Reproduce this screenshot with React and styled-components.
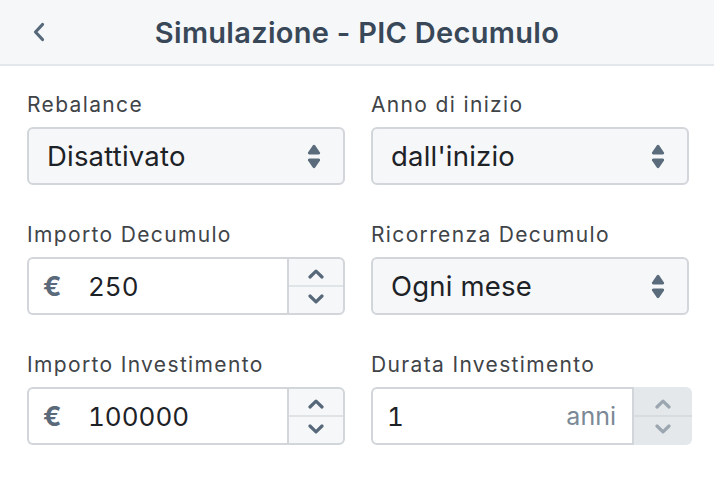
import React from "react";
import styled, { createGlobalStyle } from "styled-components";

const Global = createGlobalStyle`
  html, body { margin: 0; padding: 0; background: #ffffff; }
  body { font-family: Inter, "Noto Sans", sans-serif; -webkit-font-smoothing: antialiased; }
  * { box-sizing: border-box; }
`;

const Page = styled.div`
  width: 714px;
`;

const Header = styled.header`
  height: 66px;
  background: #f5f7f9;
  border-bottom: 2px solid #e2e7eb;
  display: grid;
  grid-template-columns: 1fr auto 1fr;
  align-items: center;
`;

const BackButton = styled.button`
  justify-self: start;
  margin-left: 31px;
  background: none;
  border: 0;
  padding: 0;
  width: 16px;
  height: 22px;
  display: flex;
  align-items: center;
  justify-content: center;
  color: #566879;
`;

const Title = styled.h1`
  margin: 0;
  font-size: 29px;
  font-weight: 600;
  color: #394858;
  letter-spacing: 0.3px;
`;

const Form = styled.div`
  display: grid;
  grid-template-columns: 318px 318px;
  column-gap: 26px;
  row-gap: 37px;
  padding: 26px 25px 0 27px;
`;

const Field = styled.div`
  display: flex;
  flex-direction: column;
`;

const Label = styled.label`
  font-size: 21px;
  line-height: 26px;
  color: #404448;
  letter-spacing: 1.35px;
  margin-bottom: 9px;
`;

const Select = styled.div`
  height: 58px;
  border: 2px solid #d2d6da;
  border-radius: 6px;
  background: #f6f7f8;
  display: flex;
  align-items: center;
  justify-content: space-between;
  padding: 0 22px 0 18px;
  font-size: 27.5px;
  letter-spacing: 0.2px;
  color: #1d2227;
`;

const NumberBox = styled.div`
  height: 58px;
  display: flex;
  align-items: stretch;
  margin-right: ${(p) => (p.$wide ? "-3px" : "0")};
`;

const InputArea = styled.div`
  flex: 1;
  display: flex;
  align-items: center;
  background: #ffffff;
  border: 2px solid #d2d6da;
  border-right: ${(p) => (p.$disabled ? "2px solid #d2d6da" : "0")};
  border-radius: 6px 0 0 6px;
  padding: 0 16px 0 14px;
  font-size: 26px;
  color: #1d2227;
  font-variant-numeric: tabular-nums;
`;

const Currency = styled.span`
  font-weight: 700;
  color: #5a6a7a;
  width: 20px;
  margin-right: 25px;
  font-size: 27px;
`;

const Value = styled.span`
  flex: 1;
`;

const Unit = styled.span`
  color: #7b8996;
  font-size: 25px;
`;

const Spinner = styled.div`
  width: 58px;
  display: flex;
  flex-direction: column;
  background: ${(p) => (p.$disabled ? "#e4e8eb" : "#f6f7f8")};
  border: ${(p) => (p.$disabled ? "0" : "2px solid #d2d6da")};
  border-radius: 0 6px 6px 0;
  color: ${(p) => (p.$disabled ? "#9ba6b0" : "#566879")};
`;

const SpinHalf = styled.div`
  flex: 1;
  display: flex;
  justify-content: center;
  align-items: ${(p) => (p.$up ? "flex-end" : "flex-start")};
  padding: ${(p) => (p.$up ? "0 0 6px" : "7px 0 0")};
  border-top: ${(p) => (p.$up ? "0" : p.$disabled ? "2px solid #d7dce0" : "2px solid #e1e4e7")};
`;

const Chevron = ({ up }) => (
  <svg width="16" height="10" viewBox="0 0 16 10" fill="none">
    <path
      d={up ? "M2 8 L8 2.2 L14 8" : "M2 2 L8 7.8 L14 2"}
      stroke="currentColor"
      strokeWidth="3.2"
      strokeLinecap="round"
      strokeLinejoin="round"
    />
  </svg>
);

const UpDown = () => (
  <svg width="14" height="25" viewBox="0 0 14 25">
    <path d="M7 0.8 Q7.6 0.8 8.2 1.5 L13 8.4 Q13.6 10.5 11.6 10.5 L2.4 10.5 Q0.4 10.5 1 8.4 L5.8 1.5 Q6.4 0.8 7 0.8 Z" fill="#5a6b7b" />
    <path d="M7 24.2 Q7.6 24.2 8.2 23.5 L13 16.6 Q13.6 14.5 11.6 14.5 L2.4 14.5 Q0.4 14.5 1 16.6 L5.8 23.5 Q6.4 24.2 7 24.2 Z" fill="#5a6b7b" />
  </svg>
);

const SelectField = ({ label, value }) => (
  <Field>
    <Label>{label}</Label>
    <Select>
      <span>{value}</span>
      <UpDown />
    </Select>
  </Field>
);

const Stepper = ({ disabled }) => (
  <Spinner $disabled={disabled}>
    <SpinHalf $up $disabled={disabled}>
      <Chevron up />
    </SpinHalf>
    <SpinHalf $disabled={disabled}>
      <Chevron />
    </SpinHalf>
  </Spinner>
);

const MoneyField = ({ label, value }) => (
  <Field>
    <Label>{label}</Label>
    <NumberBox>
      <InputArea>
        <Currency>€</Currency>
        <Value>{value}</Value>
      </InputArea>
      <Stepper />
    </NumberBox>
  </Field>
);

const DurationField = ({ label, value, unit }) => (
  <Field>
    <Label>{label}</Label>
    <NumberBox $wide>
      <InputArea $disabled>
        <Value>{value}</Value>
        <Unit>{unit}</Unit>
      </InputArea>
      <Stepper disabled />
    </NumberBox>
  </Field>
);

export default function App() {
  return (
    <Page>
      <Global />
      <Header>
        <BackButton aria-label="Indietro">
          <svg width="14" height="20" viewBox="0 0 14 20" fill="none">
            <path d="M10.5 2.5 L3.5 10 L10.5 17.5" stroke="currentColor" strokeWidth="3.2" strokeLinecap="round" strokeLinejoin="round" />
          </svg>
        </BackButton>
        <Title>Simulazione - PIC Decumulo</Title>
        <span />
      </Header>
      <Form>
        <SelectField label="Rebalance" value="Disattivato" />
        <SelectField label="Anno di inizio" value="dall'inizio" />
        <MoneyField label="Importo Decumulo" value="250" />
        <SelectField label="Ricorrenza Decumulo" value="Ogni mese" />
        <MoneyField label="Importo Investimento" value="100000" />
        <DurationField label="Durata Investimento" value="1" unit="anni" />
      </Form>
    </Page>
  );
}
